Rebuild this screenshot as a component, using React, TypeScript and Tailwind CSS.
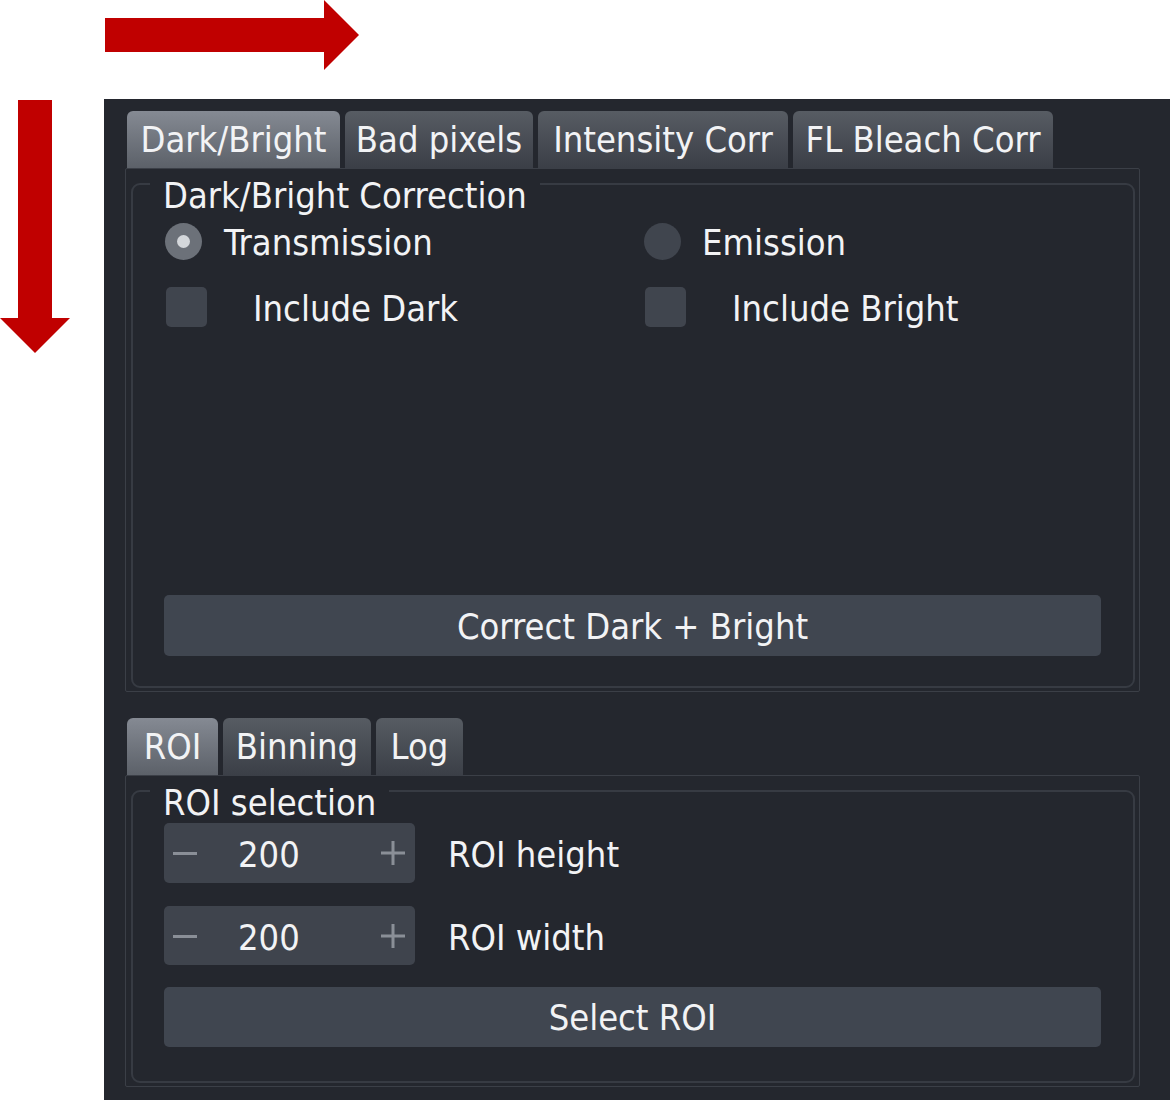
import React from "react";

const FONT = "[font-family:'DejaVu_Sans_Condensed','DejaVu_Sans',sans-serif] font-stretch-condensed";
const TXT = "text-[36px] leading-none text-[#f2f3f5] pt-[4px]";

function Tab({ label, width, active }: { label: string; width: number; active?: boolean }) {
  return (
    <div
      className={
        "flex items-center justify-center h-[57px] rounded-t-[6px] text-[36px] leading-none text-[#f2f3f5] " +
        (active
          ? "bg-gradient-to-b from-[#858a93] to-[#5c6169]"
          : "bg-gradient-to-b from-[#575c63] to-[#3b3f47]")
      }
      style={{ width }}
    >
      {label}
    </div>
  );
}

function GroupBox({ title, height, children }: { title: string; height: number; children: React.ReactNode }) {
  return (
    <div
      className="relative ml-[5px] mt-[14px] w-[1004px] rounded-[9px] border-2 border-[#373b43]"
      style={{ height }}
    >
      <div className="absolute left-[17px] top-[-4px] h-[30px] px-[13px] bg-[#24272e] text-[36px] leading-[30px] text-[#f2f3f5] whitespace-nowrap">
        {title}
      </div>
      {children}
    </div>
  );
}

function Radio({ checked }: { checked?: boolean }) {
  return (
    <div
      className={
        "flex items-center justify-center w-[37px] h-[37px] rounded-full " +
        (checked ? "bg-[#6c7179]" : "bg-[#40454e]")
      }
    >
      {checked && <div className="w-[13px] h-[13px] rounded-full bg-[#d4d7db]" />}
    </div>
  );
}

function Check() {
  return <div className="w-[41px] h-[40px] rounded-[5px] bg-[#40454e]" />;
}

function Spin({ height }: { height: number }) {
  return (
    <div className="flex items-center w-[251px] rounded-[5px] bg-[#3f444d] pl-[9px] pr-[10px]" style={{ height }}>
      <svg width="24" height="24" viewBox="0 0 24 24">
        <rect x="0" y="11" width="24" height="3" fill="#8a8f97" />
      </svg>
      <span className={"ml-[41px] " + TXT}>200</span>
      <div className="flex-1" />
      <svg width="24" height="24" viewBox="0 0 24 24">
        <rect x="0" y="10.5" width="24" height="3" fill="#8a8f97" />
        <rect x="10.5" y="0" width="3" height="24" fill="#8a8f97" />
      </svg>
    </div>
  );
}

function Button({ label, height }: { label: string; height: number }) {
  return (
    <div
      className="flex items-center justify-center w-[937px] rounded-[5px] bg-[#404650] text-[36px] leading-none text-[#f2f3f5] pt-[2px]"
      style={{ height }}
    >
      {label}
    </div>
  );
}

export default function App() {
  return (
    <div className={"w-[1170px] h-[1100px] bg-white flex flex-col overflow-hidden " + FONT}>
      <div className="h-[99px] shrink-0">
        <svg width="360" height="72" viewBox="0 0 360 72">
          <polygon points="105,18 324,18 324,0 359,35 324,70 324,52 105,52" fill="#c00000" />
        </svg>
      </div>
      <div className="flex flex-1 min-h-0">
        <div className="w-[104px] shrink-0">
          <svg width="72" height="260" viewBox="0 0 72 260">
            <polygon points="18,1 52,1 52,219 70,219 35,254 0,219 18,219" fill="#c00000" />
          </svg>
        </div>
        <div className="flex-1 bg-[#24272e] pl-[21px] pt-[12px] pr-[30px] overflow-hidden">
          {/* First tab widget */}
          <div className="flex gap-[5px] pl-[2px]">
            <Tab label="Dark/Bright" width={213} active />
            <Tab label="Bad pixels" width={188} />
            <Tab label="Intensity Corr" width={250} />
            <Tab label="FL Bleach Corr" width={260} />
          </div>
          <div className="h-[524px] border border-[#3b3f47] rounded-[2px]">
            <GroupBox title="Dark/Bright Correction" height={505}>
              <div className="flex flex-col h-full pt-[36px] pb-[30px] pl-[31px]">
                <div className="grid grid-cols-[480px_480px] h-[37px]">
                  <div className="flex items-center pl-[1px]">
                    <Radio checked />
                    <span className={"ml-[22px] " + TXT}>Transmission</span>
                  </div>
                  <div className="flex items-center">
                    <Radio />
                    <span className={"ml-[21px] " + TXT}>Emission</span>
                  </div>
                </div>
                <div className="grid grid-cols-[480px_480px] h-[40px] mt-[29px]">
                  <div className="flex items-center pl-[2px]">
                    <Check />
                    <span className={"ml-[46px] " + TXT}>Include Dark</span>
                  </div>
                  <div className="flex items-center pl-[1px]">
                    <Check />
                    <span className={"ml-[46px] " + TXT}>Include Bright</span>
                  </div>
                </div>
                <div className="flex-1" />
                <Button label="Correct Dark + Bright" height={61} />
              </div>
            </GroupBox>
          </div>

          {/* Second tab widget */}
          <div className="flex gap-[5px] pl-[2px] mt-[26px]">
            <Tab label="ROI" width={91} active />
            <Tab label="Binning" width={148} />
            <Tab label="Log" width={87} />
          </div>
          <div className="h-[312px] border border-[#3b3f47] rounded-[2px]">
            <GroupBox title="ROI selection" height={293}>
              <div className="flex flex-col pt-[31px] pl-[31px]">
                <div className="flex items-center">
                  <Spin height={60} />
                  <span className={"ml-[33px] " + TXT}>ROI height</span>
                </div>
                <div className="flex items-center mt-[23px]">
                  <Spin height={59} />
                  <span className={"ml-[33px] " + TXT}>ROI width</span>
                </div>
                <div className="mt-[22px]">
                  <Button label="Select ROI" height={60} />
                </div>
              </div>
            </GroupBox>
          </div>
        </div>
      </div>
    </div>
  );
}
